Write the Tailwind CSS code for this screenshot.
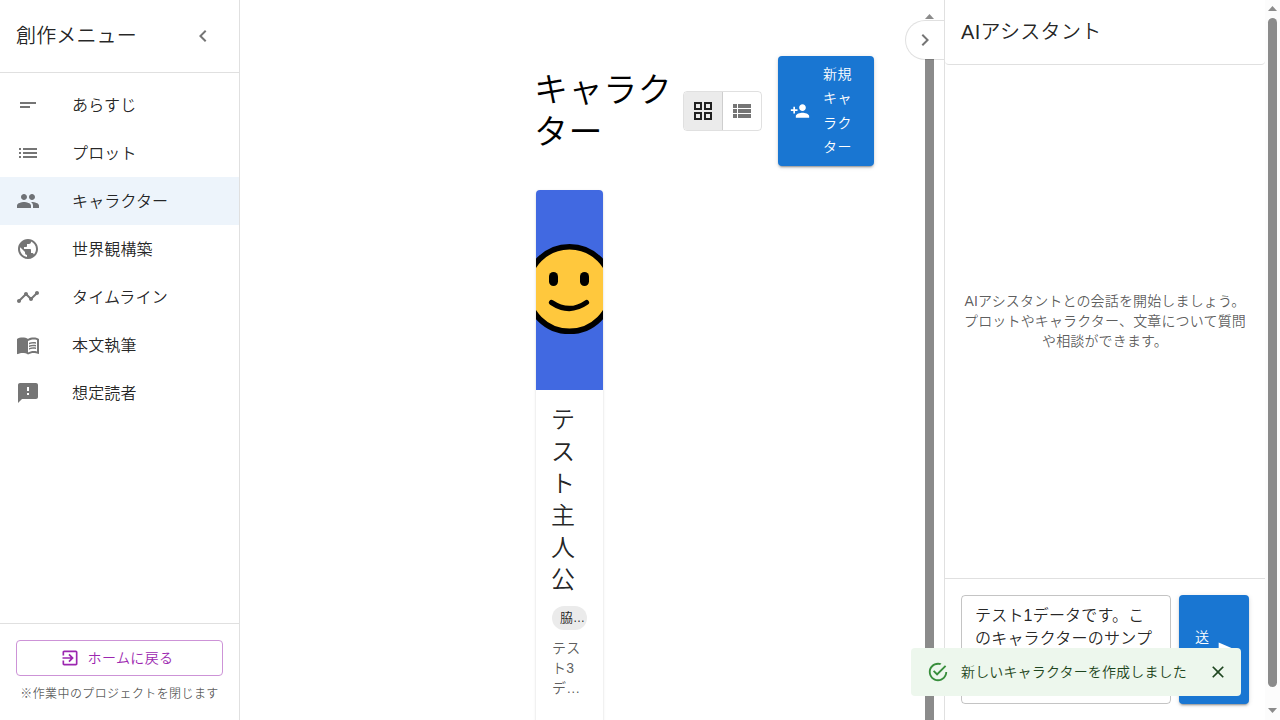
<!DOCTYPE html>
<html lang="ja">
<head>
<meta charset="utf-8">
<title>創作メニュー</title>
<script src="https://cdn.jsdelivr.net/npm/@tailwindcss/browser@4"></script>
</head>
<body class="relative flex h-[720px] w-[1280px] overflow-hidden bg-white font-['Liberation_Sans','Noto_Sans_CJK_JP',sans-serif] font-[350] text-black/87">

<!-- Sidebar -->
<aside class="flex h-full w-60 shrink-0 flex-col border-r border-black/12">
  <div class="flex h-[73px] shrink-0 items-center justify-between border-b border-black/12 pl-4 pr-6">
    <h2 class="text-xl leading-8 tracking-[0.15px]">創作メニュー</h2>
    <svg class="size-6 fill-[#757575]" viewBox="0 0 24 24"><path d="M15.41 7.41 14 6l-6 6 6 6 1.41-1.41L10.83 12z"/></svg>
  </div>
  <nav class="flex grow flex-col pt-2 text-base tracking-[0.15px]">
    <a class="flex h-12 items-center gap-8 px-4"><svg class="size-6 fill-[#757575]" viewBox="0 0 24 24"><path d="M4 9h16v2H4zm0 4h10v2H4z"/></svg><span class="pt-px">あらすじ</span></a>
    <a class="flex h-12 items-center gap-8 px-4"><svg class="size-6 fill-[#757575]" viewBox="0 0 24 24"><path d="M3 13h2v-2H3zm0 4h2v-2H3zm0-8h2V7H3zm4 4h14v-2H7zm0 4h14v-2H7zM7 7v2h14V7z"/></svg><span class="pt-px">プロット</span></a>
    <a class="flex h-12 items-center gap-8 bg-[#edf4fb] px-4"><svg class="size-6 fill-[#6f7276]" viewBox="0 0 24 24"><path d="M16 11c1.66 0 2.99-1.34 2.99-3S17.66 5 16 5s-3 1.34-3 3 1.34 3 3 3m-8 0c1.66 0 2.99-1.34 2.99-3S9.66 5 8 5 5 6.34 5 8s1.34 3 3 3m0 2c-2.33 0-7 1.17-7 3.5V19h14v-2.5c0-2.33-4.67-3.5-7-3.5m8 0c-.29 0-.62.02-.97.05 1.16.84 1.97 1.97 1.97 3.45V19h6v-2.5c0-2.33-4.67-3.5-7-3.5"/></svg><span class="pt-px">キャラクター</span></a>
    <a class="flex h-12 items-center gap-8 px-4"><svg class="size-6 fill-[#757575]" viewBox="0 0 24 24"><path d="M12 2C6.48 2 2 6.48 2 12s4.48 10 10 10 10-4.48 10-10S17.52 2 12 2m-1 17.93c-3.95-.49-7-3.85-7-7.93 0-.62.08-1.21.21-1.79L9 15v1c0 1.1.9 2 2 2zm6.9-2.54c-.26-.81-1-1.39-1.9-1.39h-1v-3c0-.55-.45-1-1-1H8v-2h2c.55 0 1-.45 1-1V7h2c1.1 0 2-.9 2-2v-.41c2.93 1.19 5 4.06 5 7.41 0 2.08-.8 3.97-2.1 5.39"/></svg><span class="pt-px">世界観構築</span></a>
    <a class="flex h-12 items-center gap-8 px-4"><svg class="size-6 fill-[#757575]" viewBox="0 0 24 24"><path d="M23 8c0 1.1-.9 2-2 2-.18 0-.35-.02-.51-.07l-3.56 3.55c.05.16.07.34.07.52 0 1.1-.9 2-2 2s-2-.9-2-2c0-.18.02-.36.07-.52l-2.55-2.55c-.16.05-.34.07-.52.07s-.36-.02-.52-.07l-4.55 4.56c.05.16.07.33.07.51 0 1.1-.9 2-2 2s-2-.9-2-2 .9-2 2-2c.18 0 .35.02.51.07l4.56-4.55C8.02 9.36 8 9.18 8 9c0-1.1.9-2 2-2s2 .9 2 2c0 .18-.02.36-.07.52l2.55 2.55c.16-.05.34-.07.52-.07s.36.02.52.07l3.55-3.56C19.02 8.35 19 8.18 19 8c0-1.1.9-2 2-2s2 .9 2 2"/></svg><span class="pt-px">タイムライン</span></a>
    <a class="flex h-12 items-center gap-8 px-4"><svg class="size-6 fill-[#757575]" viewBox="0 0 24 24"><path d="M21 5c-1.11-.35-2.33-.5-3.5-.5-1.95 0-4.05.4-5.5 1.5-1.45-1.1-3.55-1.5-5.5-1.5S2.45 4.9 1 6v14.65c0 .25.25.5.5.5.1 0 .15-.05.25-.05C3.1 20.45 5.05 20 6.5 20c1.95 0 4.05.4 5.5 1.5 1.35-.85 3.8-1.5 5.5-1.5 1.65 0 3.35.3 4.75 1.05.1.05.15.05.25.05.25 0 .5-.25.5-.5V6c-.6-.45-1.25-.75-2-1m0 13.5c-1.1-.35-2.3-.5-3.5-.5-1.7 0-4.15.65-5.5 1.5V8c1.35-.85 3.8-1.5 5.5-1.5 1.2 0 2.4.15 3.5.5z"/><path d="M17.5 10.5c.88 0 1.73.09 2.5.26V9.24c-.79-.15-1.64-.24-2.5-.24-1.7 0-3.24.29-4.5.83v1.66c1.13-.64 2.7-.99 4.5-.99M13 12.49v1.66c1.13-.64 2.7-.99 4.5-.99.88 0 1.73.09 2.5.26V11.9c-.79-.15-1.64-.24-2.5-.24-1.7 0-3.24.3-4.5.83m4.5 1.84c-1.7 0-3.24.29-4.5.83v1.66c1.13-.64 2.7-.99 4.5-.99.88 0 1.73.09 2.5.26v-1.52c-.79-.16-1.64-.24-2.5-.24"/></svg><span class="pt-px">本文執筆</span></a>
    <a class="flex h-12 items-center gap-8 px-4"><svg class="size-6 fill-[#757575]" viewBox="0 0 24 24"><path d="M20 2H4c-1.1 0-1.99.9-1.99 2L2 22l4-4h14c1.1 0 2-.9 2-2V4c0-1.1-.9-2-2-2m-7 12h-2v-2h2zm0-4h-2V6h2z"/></svg><span class="pt-px">想定読者</span></a>
  </nav>
  <div class="h-[97px] shrink-0 border-t border-black/12 p-4">
    <button class="flex h-9 w-full items-center justify-center gap-2 rounded border border-[#cd93d7] pr-1.5 text-sm tracking-[0.4px] text-[#9c27b0]"><svg class="size-5 fill-[#9c27b0]" viewBox="0 0 24 24"><path d="M10.09 15.59 11.5 17l5-5-5-5-1.41 1.41L12.67 11H3v2h9.67zM19 3H5c-1.11 0-2 .9-2 2v4h2V5h14v14H5v-4H3v4c0 1.1.89 2 2 2h14c1.1 0 2-.9 2-2V5c0-1.1-.9-2-2-2"/></svg>ホームに戻る</button>
    <p class="mt-2 whitespace-nowrap text-center text-xs leading-5 tracking-[0.4px] text-black/65">※作業中のプロジェクトを閉じます</p>
  </div>
</aside>

<!-- Characters -->
<main class="h-full w-[682px] shrink-0 overflow-hidden pl-[296px] pt-14">
  <header class="flex h-[110px] w-[338px] items-center">
    <h1 class="-ml-0.5 w-[149px] shrink-0 text-[34px] leading-[42px] tracking-[0.6px] whitespace-nowrap text-black">キャラク<br>ター</h1>
    <div class="flex h-10 w-[79px] shrink-0 overflow-hidden rounded border border-black/12">
      <div class="flex w-[39px] items-center justify-center border-r border-black/12 bg-[#ebebeb]"><svg class="size-6 fill-[#212121]" viewBox="0 0 24 24"><path d="M3 3v8h8V3zm6 6H5V5h4zm-6 4v8h8v-8zm6 6H5v-4h4zm4-16v8h8V3zm6 6h-4V5h4zm-6 4v8h8v-8zm6 6h-4v-4h4z"/></svg></div>
      <div class="flex w-[38px] items-center justify-center"><svg class="size-6 fill-[#757575]" viewBox="0 0 24 24"><path d="M3 14h4v-4H3zm0 5h4v-4H3zM3 9h4V5H3zm5 5h13v-4H8zm0 5h13v-4H8zM8 5v4h13V5z"/></svg></div>
    </div>
    <button class="ml-4 flex h-[110px] w-24 shrink-0 items-center gap-[13px] rounded bg-[#1976d2] pl-3 text-left text-sm leading-[24.5px] tracking-[0.4px] text-white shadow-[0_3px_1px_-2px_rgba(0,0,0,0.2),0_2px_2px_0_rgba(0,0,0,0.14),0_1px_5px_0_rgba(0,0,0,0.12)]"><svg class="size-5 shrink-0 fill-white" viewBox="0 0 24 24"><path d="M15 12c2.21 0 4-1.79 4-4s-1.79-4-4-4-4 1.79-4 4 1.79 4 4 4m-9-2V7H4v3H1v2h3v3h2v-3h3v-2zm9 4c-2.67 0-8 1.34-8 4v2h16v-2c0-2.66-5.33-4-8-4"/></svg><span class="pb-px">新規<br>キャ<br>ラク<br>ター</span></button>
  </header>
  <article class="mt-6 h-[560px] w-[67px] overflow-hidden rounded shadow-[0_2px_1px_-1px_rgba(0,0,0,0.2),0_1px_1px_0_rgba(0,0,0,0.14),0_1px_3px_0_rgba(0,0,0,0.12)]">
    <svg class="block h-[200px] w-[67px] bg-[#4169e1]" viewBox="0 0 67 200"><circle cx="33.5" cy="99" r="42.3" fill="#ffc83d" stroke="#000" stroke-width="5.6"/><rect x="13" y="82" width="9" height="14" rx="4.5"/><rect x="44" y="82" width="9" height="14" rx="4.5"/><path d="M15.5 112.5Q33.5 124.5 50.5 112.5" fill="none" stroke="#000" stroke-width="5.2" stroke-linecap="round"/></svg>
    <div class="p-4 pt-[14px]">
      <h3 class="-ml-px w-6 text-2xl leading-8">テスト主人公</h3>
      <div class="mt-[10px] flex h-6 w-[35px] items-center overflow-hidden rounded-full bg-[#ebebeb] pl-2 text-[13px] whitespace-nowrap">脇<span class="text-xs">…</span></div>
      <p class="mt-2 text-sm leading-5 tracking-[0.15px] whitespace-nowrap text-black/65">テス<br>ト3<br>デ…</p>
    </div>
  </article>
</main>

<!-- Main scrollbar -->
<div class="flex h-full w-[22px] shrink-0 flex-col items-center bg-white pt-[14px] pr-[7px]">
  <svg class="h-[5px] w-[9px] shrink-0 fill-[#8b8b8b]" viewBox="0 0 9 5"><path d="M4.5 0 9 5H0z"/></svg>
  <div class="mt-[13px] w-[9px] grow bg-[#8b8b8b]"></div>
</div>

<!-- Assistant panel -->
<section class="flex h-full w-[321px] shrink-0 flex-col border-l border-black/12">
  <h2 class="flex h-[65px] shrink-0 items-center rounded border-b border-black/12 px-4 text-xl tracking-[0.3px]">AIアシスタント</h2>
  <div class="flex grow items-center justify-center pb-0.5 text-center text-sm leading-5 tracking-[0.15px] whitespace-nowrap text-black/65">
    <p>AIアシスタントとの会話を開始しましょう。<br>プロットやキャラクター、文章について質問<br>や相談ができます。</p>
  </div>
  <div class="flex h-[142px] shrink-0 gap-2 border-t border-black/12 p-4">
    <div class="h-[109px] w-[210px] shrink-0 overflow-hidden rounded border border-black/23 px-[13px] pt-2 text-base leading-[23px] tracking-[0.2px] whitespace-nowrap">テスト1データです。こ<br>のキャラクターのサンプ</div>
    <button class="flex h-[109px] w-[70px] shrink-0 items-center gap-2 rounded bg-[#1976d2] pl-4 text-sm leading-[24.5px] text-white shadow-[0_3px_1px_-2px_rgba(0,0,0,0.2),0_2px_2px_0_rgba(0,0,0,0.14),0_1px_5px_0_rgba(0,0,0,0.12)]"><span>送<br>信</span><svg class="size-5 fill-white" viewBox="0 0 24 24"><path d="M2.01 21 23 12 2.01 3 2 10l15 2-15 2z"/></svg></button>
  </div>
</section>

<!-- Page scrollbar -->
<div class="flex h-full w-[15px] shrink-0 flex-col items-center bg-[#fcfcfc] pt-1.5 pb-[7px]">
  <svg class="h-[5px] w-[9px] shrink-0 fill-[#8b8b8b]" viewBox="0 0 9 5"><path d="M4.5 0 9 5H0z"/></svg>
  <div class="mt-[7px] mb-[21px] w-[9px] grow rounded-full bg-[#8b8b8b]"></div>
  <svg class="h-[5px] w-[9px] shrink-0 fill-[#8b8b8b]" viewBox="0 0 9 5"><path d="M0 0h9L4.5 5z"/></svg>
</div>

<!-- Panel toggle -->
<button class="absolute left-[905px] top-5 flex h-10 w-[39px] items-center justify-center rounded-l-full border border-r-0 border-black/12 bg-white bg-clip-padding"><svg class="size-6 fill-[#757575]" viewBox="0 0 24 24"><path d="M10 6 8.59 7.41 13.17 12l-4.58 4.59L10 18l6-6z"/></svg></button>

<!-- Snackbar -->
<div class="absolute left-[911px] top-[648px] flex h-12 w-[330px] items-center rounded bg-[#edf7ed] pl-4 text-sm tracking-[0.15px] text-[#1e4620]">
  <svg class="mr-3 size-[22px] fill-[#388e3c]" viewBox="0 0 24 24"><path d="M20 12c0 4.42-3.58 8-8 8s-8-3.58-8-8 3.58-8 8-8c.76 0 1.5.11 2.2.31l1.57-1.57C14.61 2.26 13.34 2 12 2 6.48 2 2 6.48 2 12s4.48 10 10 10 10-4.48 10-10zM7.91 10.08 6.5 11.5 11 16 21 6l-1.41-1.42L11 13.17z"/></svg>
  <span class="w-[247px]">新しいキャラクターを作成しました</span>
  <svg class="size-5 fill-[#1e4620]" viewBox="0 0 24 24"><path d="M19 6.41 17.59 5 12 10.59 6.41 5 5 6.41 10.59 12 5 17.59 6.41 19 12 13.41 17.59 19 19 17.59 13.41 12z"/></svg>
</div>
</body>
</html>
